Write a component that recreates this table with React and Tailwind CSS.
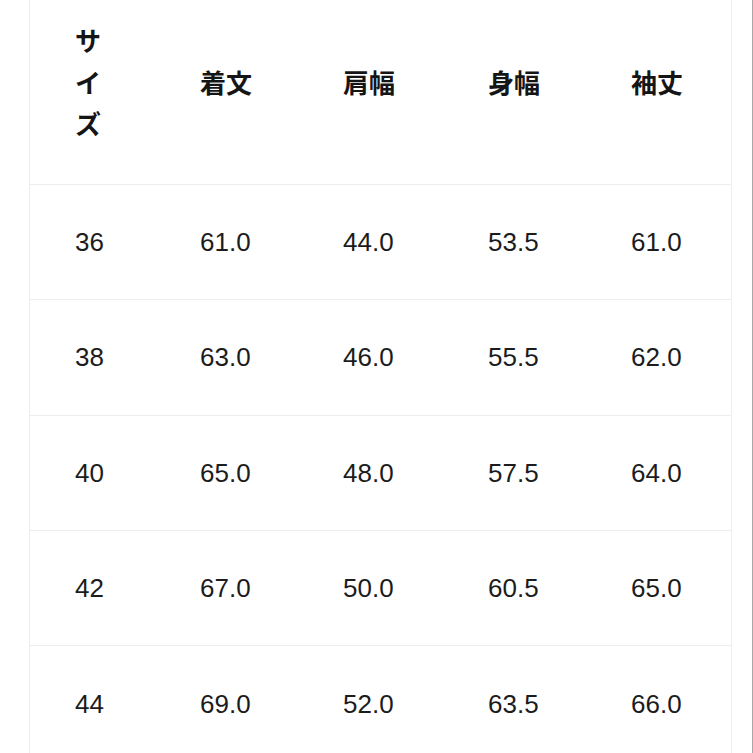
const headers = ["サイズ", "着文", "肩幅", "身幅", "袖丈"];

const rows = [
  ["36", "61.0", "44.0", "53.5", "61.0"],
  ["38", "63.0", "46.0", "55.5", "62.0"],
  ["40", "65.0", "48.0", "57.5", "64.0"],
  ["42", "67.0", "50.0", "60.5", "65.0"],
  ["44", "69.0", "52.0", "63.5", "66.0"],
];

const cols = "grid grid-cols-[125px_143px_145px_143px_145px]";

export default function App() {
  return (
    <div
      className="w-[753px] h-[753px] overflow-hidden bg-white border-r border-[#a8a8a8] flex"
      style={{ fontFamily: '"Liberation Sans", "Noto Sans CJK JP", sans-serif' }}
    >
      <div className="ml-[29px] w-[703px] border-x border-[#eeeeee] flex flex-col shrink-0">
        {/* header */}
        <div className={`${cols} items-center h-[185px] shrink-0 pt-[22px] pb-[39px] border-b border-[#ededed]`}>
          {headers.map((h, i) => (
            <div
              key={h}
              className={`pl-[45px] text-[26px] leading-[41.5px] font-bold text-[#151515] ${
                i === 0 ? "pr-[40px]" : "pr-2"
              }`}
            >
              {h}
            </div>
          ))}
        </div>
        {/* body */}
        {rows.map((r, ri) => (
          <div
            key={r[0]}
            className={`${cols} items-center h-[115.25px] shrink-0 ${
              ri < rows.length - 1 ? "border-b border-[#ededed]" : ""
            }`}
          >
            {r.map((v, ci) => (
              <div key={ci} className="pl-[45px] text-[26px] leading-none text-[#1c1c1c]">
                {v}
              </div>
            ))}
          </div>
        ))}
      </div>
    </div>
  );
}
